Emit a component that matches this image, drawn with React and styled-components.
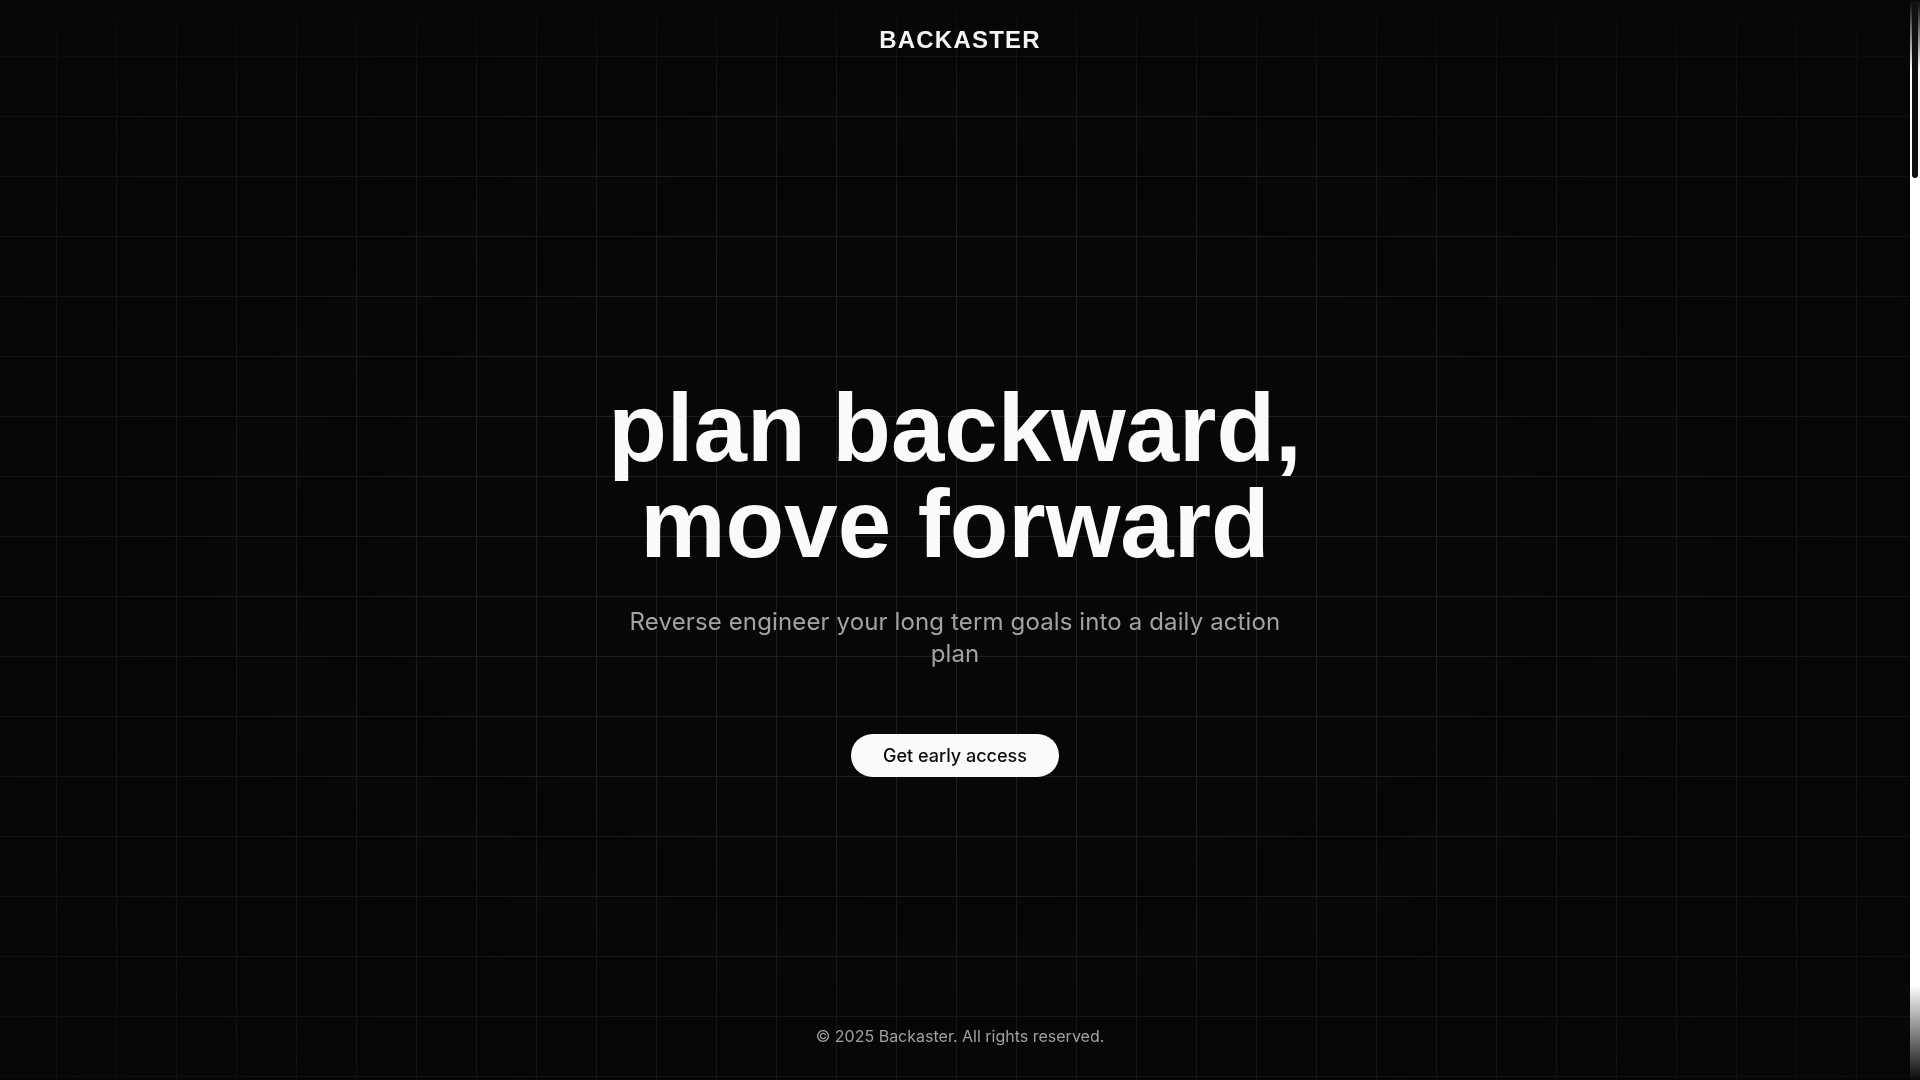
import React from 'react'
import styled, { createGlobalStyle } from 'styled-components';

const GlobalStyle = createGlobalStyle`
    html, body{
        margin: 0;
        background: #070707;
        overflow: hidden;
    }
    body{
        color: #fafafa;
        font-family: Inter, "Noto Sans", sans-serif;
    }
`;

const Page = styled.div`
    position: relative;
    display: flex;
    width: 100vw;
    height: 100vh;
`;

const GridBackdrop = styled.div`
    position: fixed;
    inset: 0;
    z-index: 0;
    pointer-events: none;
    background-color: #070707;
    background-image:
        linear-gradient(to right, #1e1e1e 1px, transparent 1px),
        linear-gradient(to bottom, #1e1e1e 1px, transparent 1px);
    background-size: 60px 60px;
    background-position: -4px -4px;
    -webkit-mask-image: radial-gradient(ellipse 75% 80% at 50% 50%, #000 35%, rgba(0,0,0,0.5) 75%, rgba(0,0,0,0.2) 100%);
    mask-image: radial-gradient(ellipse 75% 80% at 50% 50%, #000 35%, rgba(0,0,0,0.5) 75%, rgba(0,0,0,0.2) 100%);
`;

const Header = styled.header`
    position: fixed;
    top: 0;
    left: 0;
    width: 100vw;
    z-index: 10;
    display: flex;
    justify-content: center;
    padding: 25px 0 24px;
    background: linear-gradient(to bottom, rgba(7,7,7,0.9), rgba(7,7,7,0));
`;

const Logo = styled.div`
    font-family: "Liberation Sans", Arial, sans-serif;
    font-weight: 700;
    font-size: 24px;
    line-height: 30px;
    letter-spacing: 0.05em;
    color: #f5f5f5;
`;

const Hero = styled.main`
    position: relative;
    z-index: 1;
    flex: 1;
    height: 100vh;
    box-sizing: border-box;
    padding-top: 77px;
    display: flex;
    flex-direction: column;
    align-items: center;
    justify-content: center;
    text-align: center;
`;

const Title = styled.h1`
    margin: 0;
    font-family: "Liberation Sans", Arial, sans-serif;
    font-weight: 700;
    font-size: 96px;
    line-height: 96px;
    letter-spacing: 0;
    color: #fafafa;
`;

const Subtitle = styled.p`
    margin: 34px 0 0;
    max-width: 680px;
    font-size: 24px;
    line-height: 32px;
    font-weight: 400;
    color: #a3a3a3;
    letter-spacing: 0.13px;
`;

const CtaButton = styled.button`
    margin-top: 64px;
    border: none;
    outline: none;
    background: #fafafa;
    color: #0a0a0a;
    font-family: Inter, sans-serif;
    font-size: 18px;
    font-weight: 500;
    line-height: 23px;
    padding: 10px 32px;
    border-radius: 999px;
    cursor: pointer;
`;

const Footer = styled.footer`
    position: fixed;
    bottom: 0;
    left: 0;
    width: 100vw;
    z-index: 10;
    display: flex;
    justify-content: center;
    padding: 0 0 32px;
    font-size: 16px;
    line-height: 24px;
    color: #a1a1a1;
`;

const ScrollRail = styled.div`
    position: relative;
    z-index: 20;
    width: 10px;
    height: 100vh;
    box-sizing: border-box;
    padding: 3px 2px 0;
    display: flex;
    flex-direction: column;
    background: linear-gradient(to bottom, #0a0a0a 0px, #ffffff 70px, #ffffff calc(100% - 95px), #0a0a0a 100%);
`;

const ScrollThumb = styled.div`
    height: 175px;
    border-radius: 4px;
    background: #111111;
`;

const App = () => {
  return (
      <Page>
          <GlobalStyle />
          <GridBackdrop />
          <Header>
              <Logo>BACKASTER</Logo>
          </Header>
          <Hero>
              <Title>plan backward,<br />move forward</Title>
              <Subtitle>Reverse engineer your long term goals into a daily action plan</Subtitle>
              <CtaButton type='button'>Get early access</CtaButton>
          </Hero>
          <ScrollRail>
              <ScrollThumb />
          </ScrollRail>
          <Footer>© 2025 Backaster. All rights reserved.</Footer>
      </Page>
  )
}

export default App
